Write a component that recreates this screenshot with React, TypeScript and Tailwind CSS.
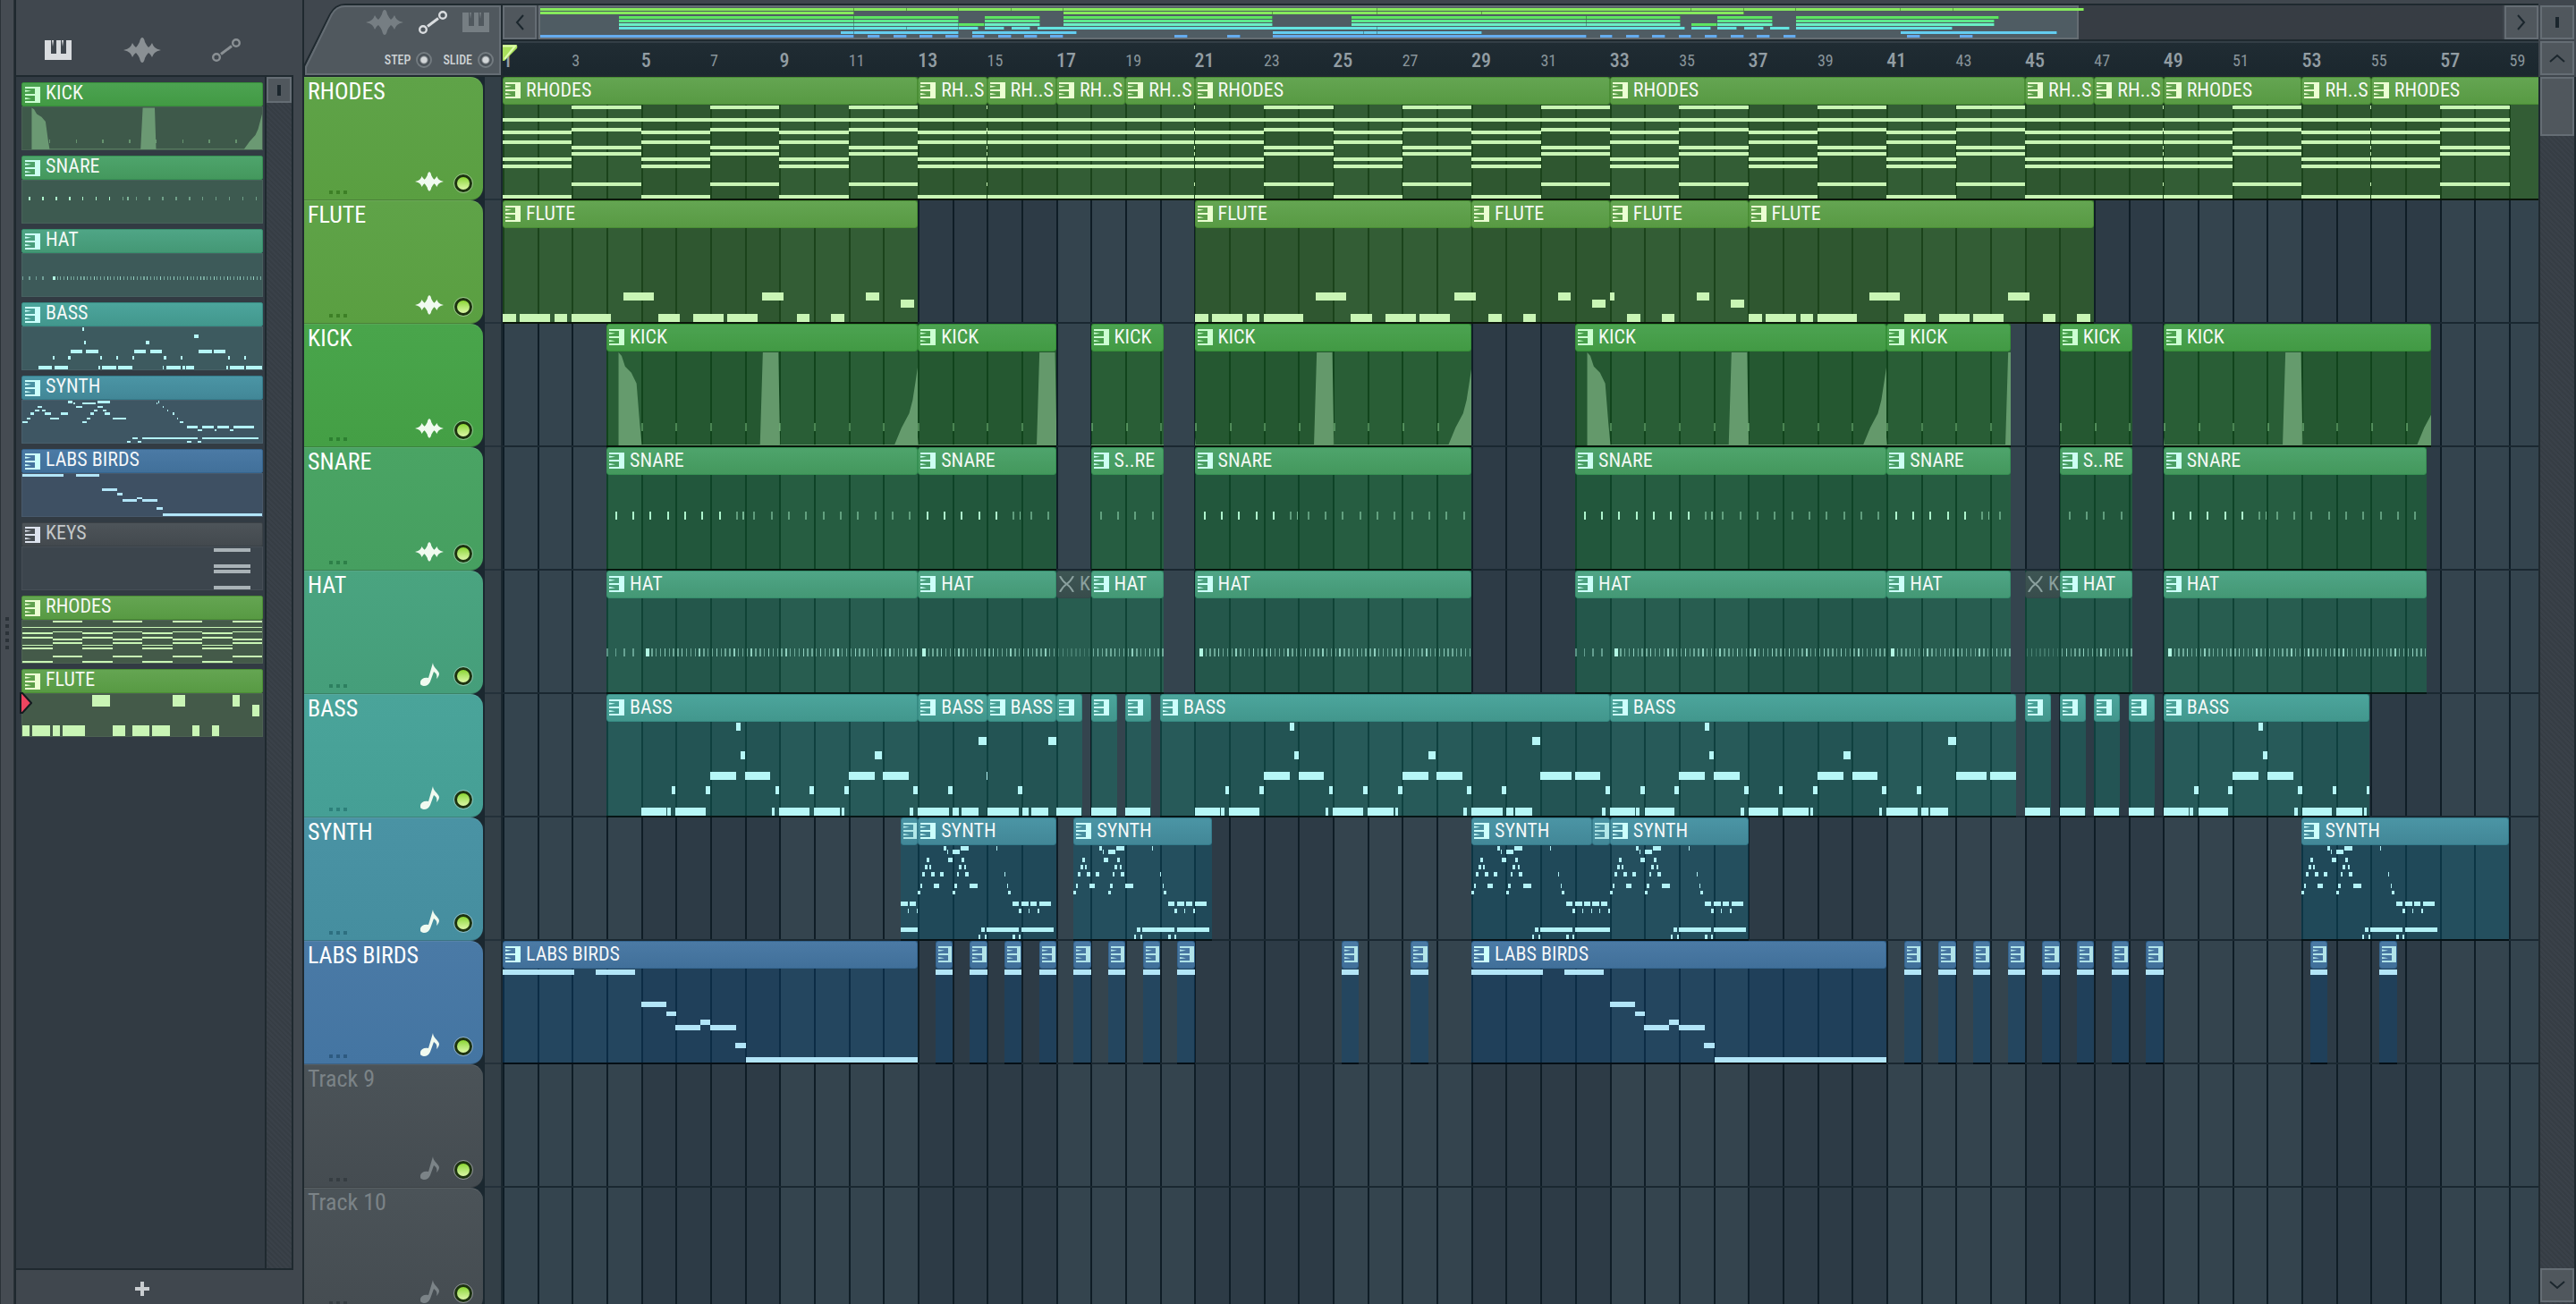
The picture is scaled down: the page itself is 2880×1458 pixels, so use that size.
import { useState } from "react";
import { clsx } from "clsx";

// Bars that fit between the two edges of the playlist / the overview
const VISIBLE_BARS = 58.84;
const OVERVIEW_BARS = 75;
const BODY_HEIGHT = 106;

// [start, end, y, height, opacity]
type Note = [number, number, number, number, number?];

type Clip = {
  start: number;
  end: number;
  offset?: number;
  label?: string;
  ghost?: boolean;
};

type PatternName = "kick" | "snare" | "hat" | "bass" | "synth" | "birds" | "keys" | "rhodes" | "flute";

const row = (y: number, height: number, spans: [number, number][]): Note[] =>
  spans.map(([start, end]) => [start, end, y, height]);

const rhodesNotes: Note[] = Array.from({ length: 8 }, (_, i) => {
  const ys = i % 2 === 0 ? [15, 29, 40, 60, 68, 102] : [1, 15, 26, 46, 54, 88];
  return ys.map((y): Note => [i * 2, i * 2 + 2, y, 4]);
}).flat();

const snareNotes: Note[] = [
  ...Array.from({ length: 18 }, (_, i): Note => {
    const at = 0.25 + i * 0.5;
    return [at, at + 0.05, 41, 9, at < 3.5 ? 1 : 0.45];
  }),
  [3.94, 3.98, 41, 9, 0.6],
];

const hatNotes: Note[] = [
  ...Array.from({ length: 4 }, (_, i): Note => [i * 0.25, i * 0.25 + 0.04, 57, 9, 0.45]),
  [1.13, 1.23, 57, 9, 1],
  ...Array.from({ length: 62 }, (_, i): Note => {
    const at = 1.3 + i * 0.125;
    return [at, at + 0.035, 57, 9, i % 4 === 3 ? 0.75 : 0.5];
  }),
];

const notes: Record<PatternName, Note[]> = {
  rhodes: rhodesNotes,
  flute: [
    ...row(97, 9, [[0, 0.38], [0.5, 1.38], [1.5, 1.87], [2, 3.13], [4.5, 5.13], [5.5, 6.38], [6.5, 7.38], [8.5, 8.87], [9.5, 9.87]]),
    ...row(73, 9, [[3.5, 4.37], [7.5, 8.13], [10.5, 10.88]]),
    ...row(81, 9, [[11.5, 11.88]]),
  ],
  kick: Array.from({ length: 8 }, (_, i): Note => [i + 1, i + 1.05, 81, 9, 0.4]),
  snare: snareNotes,
  hat: hatNotes,
  bass: [
    ...row(97, 9, [
      [1, 1.73], [1.76, 1.86], [2, 2.87], [4.77, 4.87], [5, 5.87], [6, 6.75], [6.79, 6.88], [8.77, 8.87],
      [9, 9.9], [10, 10.2], [10.26, 10.76], [12.77, 12.87], [13, 13.87], [14, 15],
    ]),
    ...row(73, 9, [[1.88, 2], [2.87, 3], [4.88, 5], [5.88, 6], [6.88, 7], [8.87, 9], [9.88, 10], [12.88, 13], [13.88, 14]]),
    ...row(57, 9, [[3, 3.75], [4, 4.74], [7, 7.75], [8, 8.74], [11, 11.88], [12, 12.73]]),
    ...row(33, 9, [[3.87, 4], [7.75, 7.95]]),
    ...row(17, 9, [[10.76, 11]]),
    ...row(1, 9, [[3.75, 3.87]]),
  ],
  synth: [
    ...row(1, 5, [[0.76, 0.83], [1.25, 1.47], [2.27, 2.29]]),
    ...row(5, 5, [[0.85, 0.88], [1, 1.22], [2.24, 2.26]]),
    ...row(14, 5, [[0.25, 0.33], [0.89, 1], [1.26, 1.34], [2.34, 2.36]]),
    ...row(22, 5, [[0.21, 0.28], [0.33, 0.39], [1.2, 1.26], [1.34, 1.4], [2.42, 2.44]]),
    ...row(30, 5, [[0.13, 0.2], [0.38, 0.48], [0.64, 0.76], [1.13, 1.2], [1.38, 1.47], [2.51, 2.53]]),
    ...row(43, 5, [[0.07, 0.13], [0.46, 0.61], [1.07, 1.13], [1.5, 1.73], [2.58, 2.6]]),
    ...row(51, 5, [[0, 0.09], [1, 1.08], [2.62, 2.68]]),
    ...row(64, 5, [[2.75, 2.93], [3, 3.2], [3.25, 3.45], [3.52, 3.86]]),
    ...row(72, 5, [[2.93, 3], [3.21, 3.24], [3.46, 3.52]]),
    ...row(93, 5, [[1.83, 1.93], [2, 2.93], [3, 3.94]]),
    ...row(101, 5, [[1.75, 1.81], [1.93, 1.98], [2.75, 2.82], [2.93, 2.98]]),
  ],
  birds: [
    ...row(1, 6, [[0, 2.08], [2.68, 3.83]]),
    ...row(37, 6, [[4, 4.73]]),
    ...row(48, 6, [[4.74, 5.01]]),
    ...row(58, 6, [[5.72, 6.01]]),
    ...row(64, 6, [[5, 5.72], [6, 6.74]]),
    ...row(84, 6, [[6.73, 7.03]]),
    ...row(100, 6, [[7.03, 12]]),
  ],
  keys: [
    [6.4, 7.6, 2, 9],
    [6.4, 7.6, 42, 9],
    [6.4, 7.6, 57, 9],
    [6.4, 7.6, 97, 9],
  ],
};

type Theme = { header: string; body: string; note: string; icon: string; head: string; dots: string; preview: string; mini: string };

const themes: Record<string, Theme> = {
  lime: {
    header: "from-[#64a552] to-[#589a43] border-[#4b8f35]",
    body: "bg-[#348d09]/35",
    note: "text-[#c9f5b5]",
    icon: "text-[#ebffd2]",
    head: "from-[#5fa348] to-[#5a9f41]",
    dots: "bg-[#3d8026]",
    preview: "bg-[#445a49]",
    mini: "bg-[#86ea5c]",
  },
  green: {
    header: "from-[#4ca351] to-[#429a44] border-[#369038]",
    body: "bg-[#178e0c]/35",
    note: "text-[#9fe8a4]",
    icon: "text-[#ccffd2]",
    head: "from-[#49a54b] to-[#449f45]",
    dots: "bg-[#2d8031]",
    preview: "bg-[#3e594a]",
    mini: "bg-[#5de562]",
  },
  emerald: {
    header: "from-[#4ea46c] to-[#44985d] border-[#369053]",
    body: "bg-[#0d8c2b]/35",
    note: "text-[#aef5cd]",
    icon: "text-[#ccfff2]",
    head: "from-[#4aa464] to-[#469f60]",
    dots: "bg-[#2d8048]",
    preview: "bg-[#3d5a50]",
    mini: "bg-[#5de98c]",
  },
  mint: {
    header: "from-[#4fa586] to-[#449875] border-[#37906d]",
    body: "bg-[#148b56]/35",
    note: "text-[#b3f7e4]",
    icon: "text-[#ccfff9]",
    head: "from-[#4aa480] to-[#459e7a]",
    dots: "bg-[#2d8060]",
    preview: "bg-[#3d5a59]",
    mini: "bg-[#6bf0c5]",
  },
  teal: {
    header: "from-[#4ca59c] to-[#42978d] border-[#378c84]",
    body: "bg-[#128470]/35",
    note: "text-[#b6f7f7]",
    icon: "text-[#ccfffc]",
    head: "from-[#4aa49a] to-[#459f95]",
    dots: "bg-[#2d807a]",
    preview: "bg-[#3d5a5f]",
    mini: "bg-[#64e4e0]",
  },
  cyan: {
    header: "from-[#4b95a5] to-[#428797] border-[#357c8c]",
    body: "bg-[#0a647d]/35",
    note: "text-[#b3f2f7]",
    icon: "text-[#ccfffc]",
    head: "from-[#4a93a4] to-[#458e9f]",
    dots: "bg-[#2d6f80]",
    preview: "bg-[#3e5663]",
    mini: "bg-[#64cdf0]",
  },
  blue: {
    header: "from-[#4b7aa5] to-[#41709a] border-[#35658f]",
    body: "bg-[#0a4b82]/35",
    note: "text-[#b2e5f8]",
    icon: "text-[#ccfffc]",
    head: "from-[#4a7aa6] to-[#4475a2]",
    dots: "bg-[#2d5a80]",
    preview: "bg-[#3e5063]",
    mini: "bg-[#65acee]",
  },
  grey: {
    header: "from-[#4d5459] to-[#43494e] border-[#3a4146]",
    body: "bg-[#3c454d]",
    note: "text-[#a9b2b7]",
    icon: "text-[#dde3ee]",
    head: "from-[#4b5358] to-[#454c51]",
    dots: "bg-[#363d42]",
    preview: "bg-[#3c454d]",
    mini: "bg-[#8a9297]",
  },
};

type Track = {
  name: string;
  theme: keyof typeof themes;
  audio?: boolean;
  pattern?: PatternName;
  clips: Clip[];
};

const half = (start: number): Clip => ({ start, end: start + 0.5, label: "" });
const stab = (start: number): Clip => ({ start, end: start + 0.75, offset: 1, label: "" });

const tracks: Track[] = [
  {
    name: "RHODES",
    theme: "lime",
    audio: true,
    pattern: "rhodes",
    clips: [
      { start: 1, end: 13 },
      { start: 13, end: 15, label: "RH..S" },
      { start: 15, end: 17, label: "RH..S" },
      { start: 17, end: 19, label: "RH..S" },
      { start: 19, end: 21, label: "RH..S" },
      { start: 21, end: 33 },
      { start: 33, end: 45 },
      { start: 45, end: 47, label: "RH..S" },
      { start: 47, end: 49, label: "RH..S" },
      { start: 49, end: 53 },
      { start: 53, end: 55, label: "RH..S" },
      // runs out of notes before the clip ends
      { start: 55, end: 60, offset: 12 },
    ],
  },
  {
    name: "FLUTE",
    theme: "lime",
    audio: true,
    pattern: "flute",
    clips: [
      { start: 1, end: 13 },
      { start: 21, end: 29 },
      { start: 29, end: 33, offset: 8 },
      { start: 33, end: 37, offset: 8 },
      { start: 37, end: 47 },
    ],
  },
  {
    name: "KICK",
    theme: "green",
    audio: true,
    pattern: "kick",
    clips: [
      { start: 4, end: 13 },
      { start: 13, end: 17, offset: 1 },
      { start: 18, end: 20.1, offset: 2 },
      { start: 21, end: 29, offset: 1 },
      { start: 32, end: 41 },
      { start: 41, end: 44.6, offset: 1 },
      { start: 46, end: 48.1, offset: 2 },
      { start: 49, end: 56.75, offset: 1 },
    ],
  },
  {
    name: "SNARE",
    theme: "emerald",
    audio: true,
    pattern: "snare",
    clips: [
      { start: 4, end: 13 },
      { start: 13, end: 17, offset: 1 },
      { start: 18, end: 20.1, offset: 5, label: "S..RE" },
      { start: 21, end: 29, offset: 1 },
      { start: 32, end: 41 },
      { start: 41, end: 44.6, offset: 1 },
      { start: 46, end: 48.1, offset: 5, label: "S..RE" },
      { start: 49, end: 56.6, offset: 1 },
    ],
  },
  {
    name: "HAT",
    theme: "mint",
    pattern: "hat",
    clips: [
      { start: 4, end: 13 },
      { start: 13, end: 17, offset: 1 },
      { start: 17, end: 18, offset: 2, label: "K", ghost: true },
      { start: 18, end: 20.1, offset: 2 },
      { start: 21, end: 29, offset: 1 },
      { start: 32, end: 41 },
      { start: 41, end: 44.6, offset: 1 },
      { start: 45, end: 46, offset: 2, label: "K", ghost: true },
      { start: 46, end: 48.1, offset: 2 },
      { start: 49, end: 56.6, offset: 1 },
    ],
  },
  {
    name: "BASS",
    theme: "teal",
    pattern: "bass",
    clips: [
      { start: 4, end: 13 },
      { start: 13, end: 15, offset: 9 },
      { start: 15, end: 17, offset: 9 },
      stab(17),
      stab(18),
      stab(19),
      { start: 20, end: 33 },
      { start: 33, end: 44.75, offset: 1 },
      stab(45),
      stab(46),
      stab(47),
      stab(48),
      { start: 49, end: 54.96, offset: 1 },
    ],
  },
  {
    name: "SYNTH",
    theme: "cyan",
    pattern: "synth",
    clips: [
      { start: 12.5, end: 13, offset: 3, label: "" },
      { start: 13, end: 17 },
      { start: 17.5, end: 21.5 },
      { start: 29, end: 32.5 },
      { start: 32.5, end: 33, offset: 3, label: "" },
      { start: 33, end: 37 },
      { start: 53, end: 58.98 },
    ],
  },
  {
    name: "LABS BIRDS",
    theme: "blue",
    pattern: "birds",
    clips: [
      { start: 1, end: 13 },
      ...[13.5, 14.5, 15.5, 16.5, 17.5, 18.5, 19.5, 20.5, 25.25, 27.25].map(half),
      { start: 29, end: 41 },
      ...[41.5, 42.5, 43.5, 44.5, 45.5, 46.5, 47.5, 48.5, 53.25, 55.25].map(half),
    ],
  },
  { name: "Track 9", theme: "grey", clips: [] },
  { name: "Track 10", theme: "grey", clips: [] },
];

const picker: { name: string; theme: keyof typeof themes; pattern: PatternName; bars: number }[] = [
  { name: "KICK", theme: "green", pattern: "kick", bars: 9 },
  { name: "SNARE", theme: "emerald", pattern: "snare", bars: 9 },
  { name: "HAT", theme: "mint", pattern: "hat", bars: 9 },
  { name: "BASS", theme: "teal", pattern: "bass", bars: 15 },
  { name: "SYNTH", theme: "cyan", pattern: "synth", bars: 4 },
  { name: "LABS BIRDS", theme: "blue", pattern: "birds", bars: 12 },
  { name: "KEYS", theme: "grey", pattern: "keys", bars: 8 },
  { name: "RHODES", theme: "lime", pattern: "rhodes", bars: 16 },
  { name: "FLUTE", theme: "lime", pattern: "flute", bars: 12 },
];

/* ---------- icons ---------- */

const PianoIcon = ({ className }: { className?: string }) => (
  <svg viewBox="0 0 30 22" className={className} fill="currentColor">
    <path d="M0 0h7v15h6V0h5v15h6V0h6v22H0z" />
    <path d="M8 0h2l-1 7z M19 0h2l-1 7z" />
  </svg>
);

const PatternIcon = ({ className }: { className?: string }) => (
  <svg viewBox="0 0 17 18" className={className} fill="currentColor">
    <path d="M0 0h17v18H0v-2h11v-6H0V8h11V2H0z" />
    <path d="M0 3.500l7 1.200-7 1z M0 12l7 1.200-7 1z" />
  </svg>
);

const WaveIcon = ({ className }: { className?: string }) => (
  <svg viewBox="0 0 42 28" className={className} fill="currentColor">
    <path d="M0 14q5-1 7-3 2-2 3-5 2 4 4 5 2-2 4-6 1-5 3-5t3 5q2 4 4 6 2-1 4-5 1 3 3 5t7 3q-5 1-7 3t-3 5q-2-4-4-5-2 2-4 6-1 5-3 5t-3-5q-2-4-4-6-2 1-4 5-1-3-3-5t-7-3z" />
  </svg>
);

const AutomationIcon = ({ className }: { className?: string }) => (
  <svg viewBox="0 0 32 26" className={className} fill="none" stroke="currentColor" strokeWidth="2.400">
    <circle cx="5" cy="21" r="3.800" />
    <circle cx="27" cy="5" r="3.800" />
    <path d="M10 17.500l12-9" strokeWidth="3" />
  </svg>
);

const NoteIcon = ({ className }: { className?: string }) => (
  <svg viewBox="0 0 21 26" className={className} fill="currentColor">
    <path d="M14 0c0 5 6 8 7 12 0 2-1 4-3 6 1-4 0-6-3-8l-4 11c-1 3-4 5-7 5s-5-2-4-5 4-5 9-4z" />
  </svg>
);

const ChevronIcon = ({ className }: { className?: string }) => (
  <svg viewBox="0 0 10 18" className={className} fill="none" stroke="currentColor" strokeWidth="2">
    <path d="M9 1L2 9l7 8" />
  </svg>
);

/* ---------- pieces ---------- */

const KickShapes = () => (
  <g fill="#7fb585" fillOpacity="0.700">
    <path d="M0.350 106V1L0.440 5L0.540 17L0.720 24L0.870 36L0.960 80L1.020 105H4.440L4.520 1H4.970L5.020 105H8.330L8.530 86L8.750 70L8.850 55L8.930 35L9 17V106z" />
  </g>
);

const PatternPreview = ({ pattern, offset = 0, bars, top = 0 }: { pattern: PatternName; offset?: number; bars: number; top?: number }) => (
  <svg viewBox={`${offset} ${top} ${bars} ${BODY_HEIGHT - top}`} preserveAspectRatio="none" className="block h-full w-full" fill="currentColor">
    {pattern === "kick" && <KickShapes />}
    {notes[pattern].map(([start, end, y, height, opacity], i) => (
      <rect key={i} x={start} y={y} width={end - start} height={height} opacity={opacity ?? 1} shapeRendering="crispEdges" />
    ))}
  </svg>
);

const ClipView = ({ clip, track }: { clip: Clip; track: Track }) => {
  const theme = themes[track.theme];
  const label = clip.label ?? track.name;
  const length = clip.end - clip.start;
  const pattern = track.pattern as PatternName;

  return (
    <div
      className={clsx("absolute inset-y-0 flex flex-col overflow-hidden border-b-2 border-black/70", theme.body)}
      style={{ left: `${((clip.start - 1) / VISIBLE_BARS) * 100}%`, width: `${(length / VISIBLE_BARS) * 100}%` }}
    >
      <div
        className={clsx(
          "flex h-[31px] shrink-0 items-center gap-[6px] overflow-hidden rounded-[3px] border bg-gradient-to-b pb-[2px] pl-[2px]",
          clip.ghost ? "border-[#33484a] from-[#3d5553] to-[#384d4c]" : theme.header
        )}
      >
        {clip.ghost ? (
          <svg viewBox="0 0 17 18" className="h-[18px] w-[17px] shrink-0 text-[#8aa09e]" fill="none" stroke="currentColor" strokeWidth="2">
            <path d="M1 0q3 6 7.500 9T16 18M16 0q-3 6-7.500 9T1 18" />
          </svg>
        ) : (
          <PatternIcon className={clsx("h-[18px] w-[17px] shrink-0", theme.icon, length < 0.6 && "opacity-80")} />
        )}
        {label && (
          <span className={clsx("whitespace-nowrap text-[22px] leading-none", clip.ghost ? "text-[#8aa09e]" : "text-white/95")}>{label}</span>
        )}
      </div>
      <div className={clsx("min-h-0 flex-1", theme.note, clip.ghost && "opacity-40")}>
        <PatternPreview pattern={pattern} offset={clip.offset} bars={length} />
      </div>
    </div>
  );
};

const Led = ({ label }: { label: string }) => (
  <input
    type="checkbox"
    defaultChecked
    aria-label={label}
    className="h-[20px] w-[20px] appearance-none rounded-full border-[3px] border-[#1d3310] bg-gradient-to-b from-[#8bd62c] to-[#dcf7a5] outline outline-1 outline-white/40"
  />
);

const TrackHead = ({ track }: { track: Track }) => {
  const theme = themes[track.theme];
  const empty = track.clips.length === 0;
  return (
    <div
      className={clsx(
        "flex h-[138px] shrink-0 flex-col justify-between rounded-r-[14px] border-b border-t border-b-black/20 border-t-white/10 bg-gradient-to-b pl-[4px]",
        theme.head
      )}
    >
      <span className={clsx("text-[26px] leading-[30px]", empty ? "text-[#7b8387]" : "text-white")}>{track.name}</span>
      <div className="flex items-center justify-end pb-[4px] pr-[12px]">
        <div className="mr-auto flex gap-1 self-end pb-[2px] pl-[24px]">
          {[0, 1, 2].map((i) => (
            <span key={i} className={clsx("h-1 w-1", theme.dots)} />
          ))}
        </div>
        <span className={clsx("mr-[12px] flex w-8 justify-center pb-1", empty ? "text-[#7b8387]" : "text-[#f0faf0]")}>
          {track.audio ? <WaveIcon className="h-[24px] w-[32px]" /> : <NoteIcon className="h-[26px] w-[21px]" />}
        </span>
        <Led label={`Enable ${track.name}`} />
      </div>
    </div>
  );
};

const Grid = () => (
  <div className="absolute inset-0 flex overflow-hidden">
    {Array.from({ length: Math.ceil(VISIBLE_BARS) }, (_, i) => (
      <div
        key={i}
        className={clsx("shrink-0 border-l-2 border-[#0f1d26]", Math.floor(i / 4) % 2 === 0 ? "bg-[#34444e]" : "bg-[#2d3b46]")}
        style={{ width: `${100 / VISIBLE_BARS}%` }}
      />
    ))}
  </div>
);

const Ruler = () => (
  <div className="relative h-9 overflow-hidden bg-gradient-to-b from-[#202c33] to-[#1b272e]">
    {Array.from({ length: 30 }, (_, i) => i * 2 + 1).map((bar) => (
      <span
        key={bar}
        className={clsx(
          "absolute bottom-[4px] leading-6",
          bar % 4 === 1 ? "text-[22px] font-medium text-[#929da3]" : "text-[18px] text-[#89959b]"
        )}
        style={{ left: `${((bar - 1) / VISIBLE_BARS) * 100}%` }}
      >
        {bar}
      </span>
    ))}
    <svg viewBox="0 0 17 19" className="absolute left-0 top-[2px] h-[19px] w-[17px]">
      <path d="M0 0h15q2 1 1 4L2 18H0z" fill="#a9e05c" />
      <path d="M0 1.500h14L11 5 2 16" fill="none" stroke="#dffcae" strokeWidth="2" />
    </svg>
  </div>
);

const Overview = () => (
  <div className="relative mx-[2px] flex-1 bg-[#373d44]">
    <div className="absolute inset-y-0 left-0 w-[78.4%] border-2 border-[#656d73] bg-[#4f5c63]" />
    <div className="absolute inset-x-0 inset-y-[2px] ml-[2px] flex flex-col">
      {tracks.slice(0, 8).map((track) => (
        <div key={track.name} className="relative flex-1">
          {track.clips.map((clip, i) => (
            <span
              key={i}
              className={clsx("absolute top-[1px] h-[3px] border-r border-black/30", clip.ghost ? themes.green.mini : themes[track.theme].mini)}
              style={{ left: `${((clip.start - 1) / OVERVIEW_BARS) * 100}%`, width: `${((clip.end - clip.start) / OVERVIEW_BARS) * 100}%` }}
            />
          ))}
        </div>
      ))}
    </div>
  </div>
);

const square = "flex h-[38px] w-[38px] shrink-0 items-center justify-center border-2 border-[#656d74] bg-[#50575d] text-[#1b262d]";
const hatch = "bg-[repeating-linear-gradient(45deg,#3a4149_0_2px,#363d44_2px_4px)]";

export default function App() {
  const [selected, setSelected] = useState("FLUTE");

  return (
    <div className="flex h-screen w-full overflow-hidden bg-[#40474e] font-['Roboto_Condensed','Roboto',sans-serif] text-white">
      {/* Resize handle */}
      <div className="flex w-4 shrink-0 flex-col items-center justify-center gap-1 border-l border-r border-[#2b3238] bg-[#454b52] pb-[42px]">
        {[0, 1, 2, 3, 4].map((i) => (
          <span key={i} className="h-1 w-1 bg-[#2b3238]" />
        ))}
      </div>

      {/* Picker */}
      <aside className="flex w-[312px] shrink-0 flex-col border-l-2 border-[#1f292f]">
        <div className="flex h-[84px] shrink-0 items-center pr-7 pt-[28px]">
          <button aria-label="Patterns" className="flex flex-1 justify-center text-[#d9dcdf]">
            <PianoIcon className="h-[22px] w-[30px]" />
          </button>
          <button aria-label="Audio clips" className="flex flex-1 justify-center text-[#8a9094]">
            <WaveIcon className="h-[28px] w-[42px]" />
          </button>
          <button aria-label="Automation clips" className="flex flex-1 justify-center text-[#8a9094]">
            <AutomationIcon className="h-[26px] w-[32px]" />
          </button>
        </div>
        <div className="flex min-h-0 flex-1 border-y-2 border-r-2 border-[#1f292f] bg-[#323b43]">
          <ul className="flex min-w-0 flex-1 flex-col gap-[6px] overflow-hidden px-[6px] pr-[2px] pt-[6px]">
            {picker.map((item) => {
              const theme = themes[item.theme];
              return (
                <li key={item.name} className="relative h-[76px] shrink-0">
                  <button onClick={() => setSelected(item.name)} className="flex h-full w-full flex-col text-left">
                    <span className={clsx("flex h-[27px] w-full shrink-0 items-center gap-[6px] rounded-[2px] border bg-gradient-to-b pl-[3px]", theme.header)}>
                      <PatternIcon className={clsx("h-[18px] w-[17px]", theme.icon)} />
                      <span className={clsx("pb-1 text-[22px] leading-none", item.theme === "grey" ? "text-[#c3c7c9]" : "text-white/95")}>{item.name}</span>
                    </span>
                    <span className={clsx("block min-h-0 w-full flex-1 border border-white/5", theme.preview, theme.note)}>
                      <PatternPreview pattern={item.pattern} bars={item.bars} top={item.pattern === "flute" ? 72 : 0} />
                    </span>
                  </button>
                  {selected === item.name && (
                    <svg viewBox="0 0 14 24" className="absolute -left-[2px] top-[26px] h-[24px] w-[14px]">
                      <path d="M1 1h2l10 11L3 23H1z" fill="#ee4560" stroke="#141b20" strokeWidth="2" />
                    </svg>
                  )}
                </li>
              );
            })}
          </ul>
          <div className={clsx("w-[30px] border-l-2 border-[#1f292f]", hatch)}>
            <button aria-label="Picker scroll" className="flex h-[29px] w-full items-center justify-center border-2 border-[#656d74] bg-[#50575d]">
              <span className="h-3 w-1 bg-[#1b262d]" />
            </button>
          </div>
        </div>
        <button aria-label="Add pattern" className="flex h-[38px] shrink-0 items-center justify-center pr-7 pt-1 text-[#c9cdd0]">
          <svg viewBox="0 0 16 16" className="h-4 w-4" fill="currentColor">
            <path d="M6 0h4v6h6v4h-6v6H6v-6H0V6h6z" />
          </svg>
        </button>
      </aside>

      {/* Playlist */}
      <main className="ml-[10px] flex min-w-0 flex-1 flex-col border-l-2 border-[#1f292f]">
        <div className="flex h-[86px] shrink-0">
          {/* Mode tab */}
          <div className="relative mt-1 flex h-[82px] w-[222px] shrink-0 flex-col justify-between pb-[10px] pt-[7px]">
            <svg viewBox="0 0 222 82" className="absolute inset-0 h-full w-full" fill="none">
              <path d="M0 81V70L29 12Q35 1 46 1H221V81z" fill="#50585e" stroke="#1f292f" strokeWidth="2" />
              <path d="M2 79V71L31 12Q36 3 46 3H219V79z" stroke="#656d74" strokeWidth="2" />
            </svg>
            <div className="relative flex items-center justify-end gap-[17px] pr-[15px]">
              <button aria-label="Show audio" className="text-[#767e83]">
                <WaveIcon className="h-[28px] w-[42px]" />
              </button>
              <button aria-label="Show automation" className="text-[#d9dcdf]">
                <AutomationIcon className="h-[26px] w-[32px]" />
              </button>
              <button aria-label="Show patterns" className="text-[#767e83]">
                <PianoIcon className="h-[22px] w-[30px]" />
              </button>
            </div>
            <div className="relative flex items-center justify-end gap-3 pr-[10px] text-[14px] font-medium leading-none text-[#cdd2d5]">
              {["STEP", "SLIDE"].map((mode) => (
                <label key={mode} className="flex items-center gap-[6px]">
                  {mode}
                  <input type="checkbox" className="h-[18px] w-[18px] appearance-none rounded-full border-2 border-[#737b80] bg-[radial-gradient(circle,#d2d6d8_0_3px,#4a5258_5px)]" />
                </label>
              ))}
            </div>
          </div>

          <div className="flex min-w-0 flex-1 flex-col">
            <div className="mt-1 flex h-[42px] border-y-2 border-[#1f292f]">
              <button aria-label="Scroll left" className={square}>
                <ChevronIcon className="h-[18px] w-[10px]" />
              </button>
              <Overview />
              <button aria-label="Scroll right" className={square}>
                <ChevronIcon className="h-[18px] w-[10px] rotate-180" />
              </button>
            </div>
            <div className="h-[2px] bg-[#333e46]" />
            <Ruler />
            <div className="h-[2px] border-b-2 border-[#1f292f] bg-[#333e46]" />
          </div>

          <div className="ml-[2px] mr-[2px] flex flex-col gap-[2px] pt-[6px]">
            <button aria-label="Zoom" className={square}>
              <span className="h-3 w-1 bg-[#1b262d]" />
            </button>
            <button aria-label="Scroll up" className={square}>
              <ChevronIcon className="h-[18px] w-[10px] rotate-90" />
            </button>
          </div>
        </div>

        <div className="flex min-h-0 flex-1">
          <div className="flex w-[202px] shrink-0 flex-col overflow-hidden border-r-2 border-[#1b2830] bg-[#1b2830]">
            {tracks.map((track) => (
              <TrackHead key={track.name} track={track} />
            ))}
          </div>
          <div className="w-5 shrink-0 overflow-hidden border-r-2 border-[#1b2830] bg-[#333f47]">
            {tracks.map((track) => (
              <div key={track.name} className="h-[138px] border-b-2 border-[#24313a]" />
            ))}
          </div>
          <div className="relative min-w-0 flex-1 overflow-hidden">
            <Grid />
            {tracks.map((track) => (
              <div key={track.name} className="relative h-[138px] overflow-hidden">
                <div className="absolute inset-x-0 bottom-0 h-[2px] bg-[#1a2831]" />
                {track.clips.map((clip, i) => (
                  <ClipView key={i} clip={clip} track={track} />
                ))}
              </div>
            ))}
          </div>
          <div className={clsx("flex w-[42px] shrink-0 flex-col justify-between border-l-2 border-r-2 border-[#1f292f] pb-[2px]", hatch)}>
            <button aria-label="Vertical scroll" className="h-[66px] w-full border-2 border-[#656d74] bg-[#50575d]" />
            <button aria-label="Scroll down" className={square}>
              <ChevronIcon className="h-[18px] w-[10px] -rotate-90" />
            </button>
          </div>
        </div>
      </main>
    </div>
  );
}
